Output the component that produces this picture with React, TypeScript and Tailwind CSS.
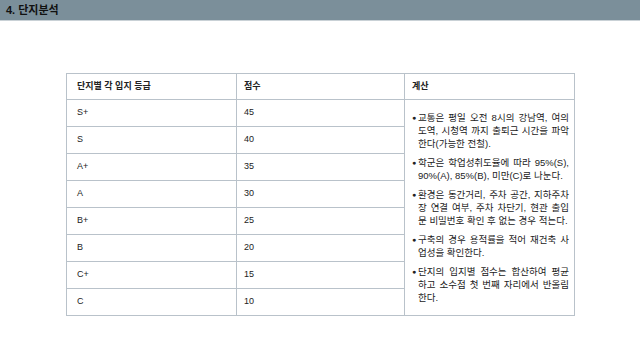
import React from "react";

const rows = [
  ["S+", "45"],
  ["S", "40"],
  ["A+", "35"],
  ["A", "30"],
  ["B+", "25"],
  ["B", "20"],
  ["C+", "15"],
  ["C", "10"],
];

const notes: string[][] = [
  ["교통은 평일 오전 8시의 강남역, 여의", "도역, 시청역 까지 출퇴근 시간을 파악", "한다(가능한 전철)."],
  ["학군은 학업성취도율에 따라 95%(S),", "90%(A), 85%(B), 미만(C)로 나눈다."],
  ["환경은 동간거리, 주차 공간, 지하주차", "장 연결 여부, 주차 차단기, 현관 출입", "문 비밀번호 확인 후 없는 경우 적는다."],
  ["구축의 경우 용적률을 적어 재건축 사", "업성을 확인한다."],
  ["단지의 입지별 점수는 합산하여 평균", "하고 소수점 첫 번째 자리에서 반올림", "한다."],
];

export default function App() {
  return (
    <div
      className="w-[640px] h-[360px] bg-white overflow-hidden text-[#222]"
      style={{ fontFamily: '"Liberation Sans", "Noto Sans CJK KR", sans-serif' }}
    >
      <div className="h-[20px] bg-[#7b8f9a] border-b border-[#c9d1d6] box-content flex items-center pl-[6px]">
        <span className="text-[11px] font-bold text-[#111] leading-none">4. 단지분석</span>
      </div>
      <div className="pt-[52px] pl-[66px]">
        <table className="border-collapse w-[508px] table-fixed text-[9px]">
          <colgroup>
            <col className="w-[170px]" />
            <col className="w-[168px]" />
            <col className="w-[170px]" />
          </colgroup>
          <tbody>
            <tr className="h-[26px]">
              <td className="border border-[#b9c2ca] pl-[10px] font-semibold">단지별 각 입지 등급</td>
              <td className="border border-[#b9c2ca] pl-[7px] font-semibold">점수</td>
              <td className="border border-[#b9c2ca] pl-[7px] font-semibold">계산</td>
            </tr>
            {rows.map(([g, s], i) => (
              <tr key={g} className="h-[27px]">
                <td className="border border-[#b9c2ca] pl-[10px]">{g}</td>
                <td className="border border-[#b9c2ca] pl-[7px]">{s}</td>
                {i === 0 && (
                  <td rowSpan={8} className="border border-[#b9c2ca] align-middle pl-[7px] pr-[5px]">
                    <div className="flex flex-col gap-[6px]">
                      {notes.map((lines) => (
                        <div key={lines[0]} className="flex leading-[13px] text-[9.5px]">
                          <span className="w-[6px] shrink-0 text-[7px]">●</span>
                          <div className="flex-1 flex flex-col">
                            {lines.map((l, j) => (
                              <span
                                key={j}
                                className={
                                  j < lines.length - 1
                                    ? "whitespace-nowrap text-justify [text-align-last:justify]"
                                    : "whitespace-nowrap"
                                }
                              >
                                {l}
                              </span>
                            ))}
                          </div>
                        </div>
                      ))}
                    </div>
                  </td>
                )}
              </tr>
            ))}
          </tbody>
        </table>
      </div>
    </div>
  );
}
